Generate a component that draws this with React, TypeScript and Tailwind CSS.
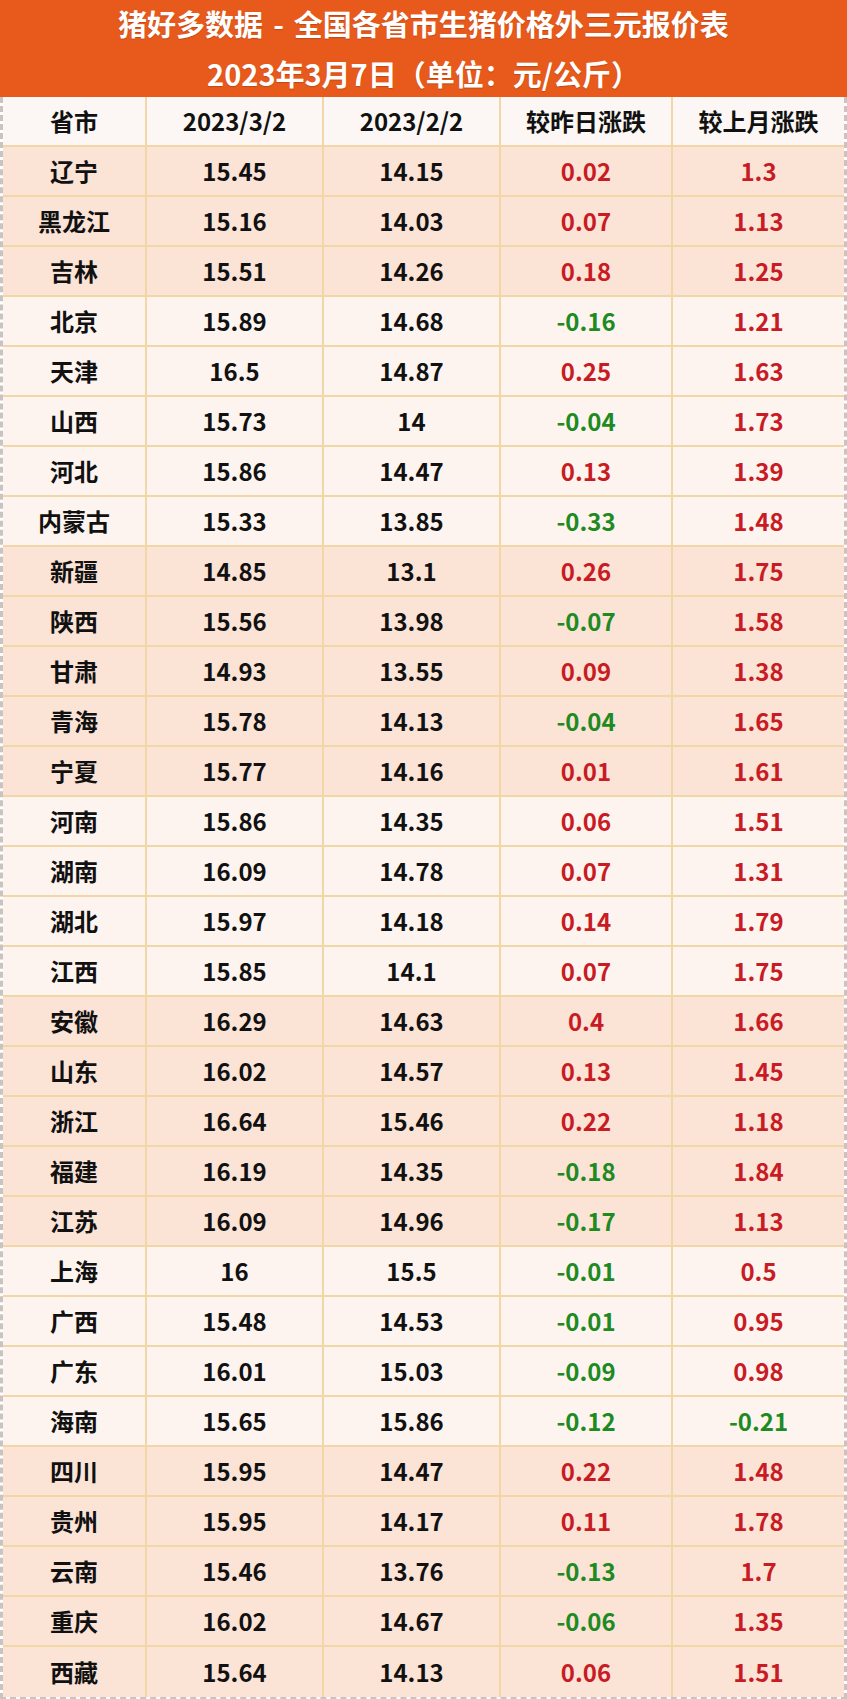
import React from 'react';

type Row = {
  name: string;
  cur: string;
  prev: string;
  day: string;
  month: string;
  pink: boolean;
};

const raw: [string, string, string, string, string, number][] = [
  ['辽宁', '15.45', '14.15', '0.02', '1.3', 1],
  ['黑龙江', '15.16', '14.03', '0.07', '1.13', 1],
  ['吉林', '15.51', '14.26', '0.18', '1.25', 1],
  ['北京', '15.89', '14.68', '-0.16', '1.21', 0],
  ['天津', '16.5', '14.87', '0.25', '1.63', 0],
  ['山西', '15.73', '14', '-0.04', '1.73', 0],
  ['河北', '15.86', '14.47', '0.13', '1.39', 0],
  ['内蒙古', '15.33', '13.85', '-0.33', '1.48', 0],
  ['新疆', '14.85', '13.1', '0.26', '1.75', 1],
  ['陕西', '15.56', '13.98', '-0.07', '1.58', 1],
  ['甘肃', '14.93', '13.55', '0.09', '1.38', 1],
  ['青海', '15.78', '14.13', '-0.04', '1.65', 1],
  ['宁夏', '15.77', '14.16', '0.01', '1.61', 1],
  ['河南', '15.86', '14.35', '0.06', '1.51', 0],
  ['湖南', '16.09', '14.78', '0.07', '1.31', 0],
  ['湖北', '15.97', '14.18', '0.14', '1.79', 0],
  ['江西', '15.85', '14.1', '0.07', '1.75', 0],
  ['安徽', '16.29', '14.63', '0.4', '1.66', 1],
  ['山东', '16.02', '14.57', '0.13', '1.45', 1],
  ['浙江', '16.64', '15.46', '0.22', '1.18', 1],
  ['福建', '16.19', '14.35', '-0.18', '1.84', 1],
  ['江苏', '16.09', '14.96', '-0.17', '1.13', 1],
  ['上海', '16', '15.5', '-0.01', '0.5', 0],
  ['广西', '15.48', '14.53', '-0.01', '0.95', 0],
  ['广东', '16.01', '15.03', '-0.09', '0.98', 0],
  ['海南', '15.65', '15.86', '-0.12', '-0.21', 0],
  ['四川', '15.95', '14.47', '0.22', '1.48', 1],
  ['贵州', '15.95', '14.17', '0.11', '1.78', 1],
  ['云南', '15.46', '13.76', '-0.13', '1.7', 1],
  ['重庆', '16.02', '14.67', '-0.06', '1.35', 1],
  ['西藏', '15.64', '14.13', '0.06', '1.51', 1],
];

const rows: Row[] = raw.map(([name, cur, prev, day, month, pink]) => ({
  name,
  cur,
  prev,
  day,
  month,
  pink: pink === 1,
}));

const cell = 'flex items-center justify-center border-r-2 border-[#f2d7a6]';
const lastCell = 'flex items-center justify-center';

function Change({ value }: { value: string }) {
  const down = value.startsWith('-');
  return <span className={down ? 'text-[#1d8a22]' : 'text-[#c81b24]'}>{value}</span>;
}

export default function App() {
  return (
    <div
      className="w-[847px] font-bold"
      style={{ fontFamily: '"Noto Sans CJK SC", "Noto Sans", sans-serif' }}
    >
      <div className="h-[97px] bg-[#e85a1c] text-white leading-none flex flex-col items-center justify-center gap-[21px] [text-shadow:0_1px_1px_rgba(120,40,0,0.35)]">
        <div className="text-[29px]">
          猪好多数据<span className="mx-[10px]">-</span>全国各省市生猪价格外三元报价表
        </div>
        <div className="text-[29px]">2023年3月7日（单位：元/公斤）</div>
      </div>
      <div className="border-x-[3px] border-b-2 border-dashed border-x-[#c9c4c0] border-b-[#c9c4c0] text-[24px] leading-none text-[#111]">
        <div className="grid grid-cols-[144px_177px_177px_172px_1fr] h-[50px] bg-[#fcf7f4] border-b-2 border-[#f2d7a6]">
          <div className={cell}>省市</div>
          <div className={cell}>2023/3/2</div>
          <div className={cell}>2023/2/2</div>
          <div className={cell}>较昨日涨跌</div>
          <div className={lastCell}>较上月涨跌</div>
        </div>
        {rows.map((r, i) => (
          <div
            key={r.name}
            className={`grid grid-cols-[144px_177px_177px_172px_1fr] h-[50px] ${
              r.pink ? 'bg-[#fbe3d6]' : 'bg-[#fdf4ef]'
            } ${i < rows.length - 1 ? 'border-b-2 border-[#f2d7a6]' : ''}`}
          >
            <div className={cell}>{r.name}</div>
            <div className={cell}>{r.cur}</div>
            <div className={cell}>{r.prev}</div>
            <div className={cell}>
              <Change value={r.day} />
            </div>
            <div className={lastCell}>
              <Change value={r.month} />
            </div>
          </div>
        ))}
      </div>
    </div>
  );
}
